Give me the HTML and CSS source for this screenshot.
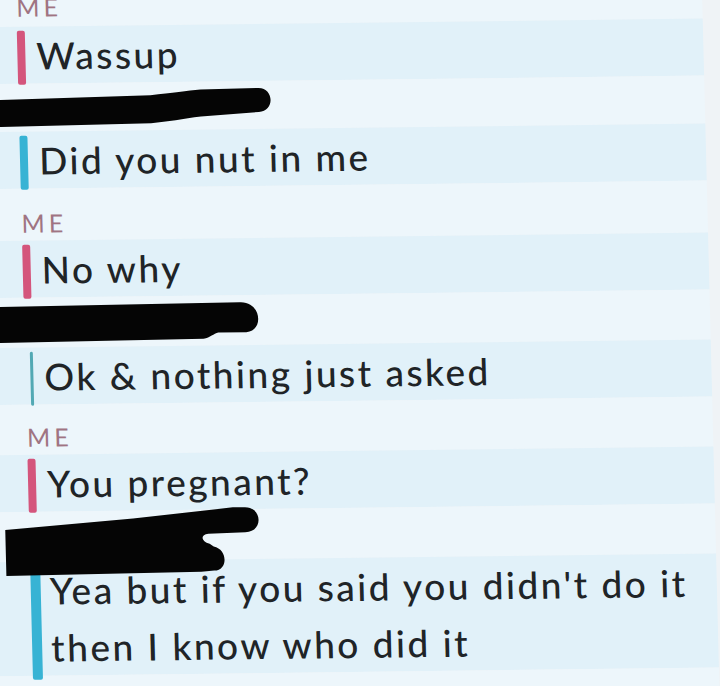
FILE: index.html
```html
<!DOCTYPE html>
<html lang="en">
<head>
<meta charset="utf-8">
<title>Chat</title>
<link rel="stylesheet" href="styles.css">
</head>
<body>
<div class="screen">
  <div class="chat">
    <div class="label label-top"><span class="who">ME</span></div>
    <div class="msg mine"><i class="bar"></i><p class="text">Wassup</p></div>
    <div class="label label-short">
      <svg class="redact" width="300" height="48" viewBox="-40 0 300 48" aria-hidden="true"><path d="M-60 17 L-12 16 L138 13 C160 11 175 9 188 8 L246 7 C262 7 262 31 246 31 L188 35 C170 37 155 40 138 41 L-12 43 L-60 44 Z"/></svg>
    </div>
    <div class="msg theirs"><i class="bar"></i><p class="text">Did you nut in me</p></div>
    <div class="label label-tall"><span class="who">ME</span></div>
    <div class="msg mine"><i class="bar"></i><p class="text">No why</p></div>
    <div class="label">
      <svg class="redact" width="300" height="50" viewBox="-40 0 300 50" aria-hidden="true"><path d="M-60 9 L-18 9 L222 7 C244 6 246 36 228 37 L200 37 C195 38 192 42 185 43 L-18 45 L-60 46 Z"/></svg>
    </div>
    <div class="msg theirs thin"><i class="bar"></i><p class="text">Ok &amp; nothing just asked</p></div>
    <div class="label"><span class="who">ME</span></div>
    <div class="msg mine"><i class="bar"></i><p class="text">You pregnant?</p></div>
    <div class="label">
      <svg class="redact" width="300" height="50" viewBox="-40 0 300 50" aria-hidden="true"><path d="M-18 18 L110 8 L210 -2 L222 -2 C240 -2 240 23 222 23 L185 24 C176 25 178 32 186 34 L190 37 C204 40 204 61 190 61 L177 62 L-18 64 Z"/></svg>
    </div>
    <div class="msg theirs wide"><i class="bar"></i><p class="text">Yea but if you said you didn't do it<br>then I know who did it</p></div>
    <div class="label label-end"></div>
  </div>
</div>
</body>
</html>
```

FILE: styles.css
```css
html, body {
  margin: 0;
  padding: 0;
}

body {
  background: #eff3f6;
  font-family: Lato, "Open Sans", "DejaVu Sans", sans-serif;
  overflow: hidden;
}

.screen {
  width: 720px;
  height: 686px;
  overflow: hidden;
  background: #eff3f6;
}

.chat {
  width: 732px;
  margin-left: -30px;
  transform: matrix(1, -0.012, 0.025, 1, 0, 0);
  transform-origin: 30px 0;
}

.label {
  height: 50px;
  box-sizing: border-box;
  display: flex;
  align-items: flex-end;
  padding: 0 0 6px 46px;
  background: #edf6fb;
}

.label-top {
  height: 27px;
  padding-bottom: 8px;
}

.label-short {
  height: 48px;
}

.label-tall {
  height: 52px;
}

.label-end {
  height: 60px;
}

.who {
  font-size: 25px;
  line-height: 24px;
  letter-spacing: 4px;
  color: #a07482;
}

.redact {
  display: block;
  overflow: visible;
  position: relative;
  z-index: 2;
  margin-left: -46px;
  align-self: flex-start;
  fill: #050505;
}

.msg {
  display: flex;
  padding-left: 46px;
  background: #e1f1f9;
}

.bar {
  flex: none;
  width: 8px;
  margin: 4px 0 -1px;
  border-radius: 2px;
}

.mine .bar {
  background: #d4557c;
}

.theirs .bar {
  background: #37b3d4;
}

.thin .bar {
  width: 3px;
  margin-left: 5px;
  background: #52a9b4;
}

.wide .bar {
  width: 10px;
  margin-top: 8px;
  margin-bottom: -4px;
}

.text {
  margin: 0 0 0 11px;
  font-size: 37px;
  font-weight: 500;
  letter-spacing: 2.5px;
  line-height: 57px;
  color: #202427;
}

.wide .text {
  margin-left: 9px;
}
```
